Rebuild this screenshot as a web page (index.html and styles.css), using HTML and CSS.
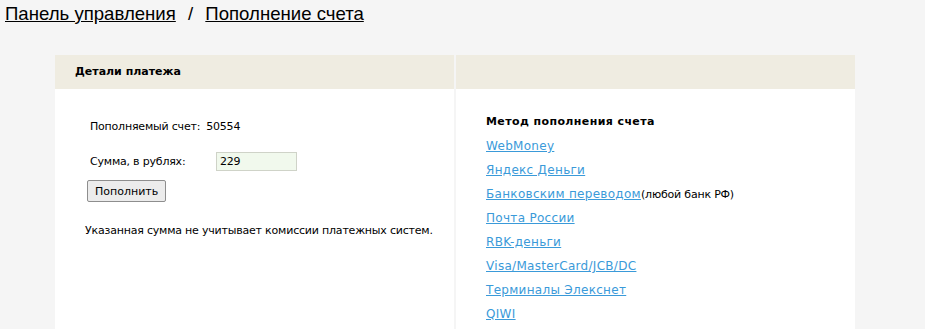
FILE: index.html
```html
<!DOCTYPE html>
<html lang="ru">
<head>
    <meta charset="UTF-8">
    <title>Пополнение счета</title>
    <link rel="stylesheet" href="styles.css">
</head>
<body>

<div class="crumbs">
    <a href="#">Панель управления</a>
    <span class="sep">/</span>
    <a href="#">Пополнение счета</a>
</div>

<div class="panel">
    <div class="col">
        <div class="col-head">Детали платежа</div>
        <div class="col-body left">
            <div class="row">
                <span class="label">Пополняемый счет:</span>
                <span>50554</span>
            </div>
            <div class="row">
                <span class="label wide">Сумма, в рублях:</span>
                <input type="text" class="sum" value="229">
            </div>
            <button class="pay-btn">Пополнить</button>
            <p class="note">Указанная сумма не учитывает комиссии платежных систем.</p>
        </div>
    </div>

    <div class="col">
        <div class="col-head"></div>
        <div class="col-body right">
            <div class="method-title">Метод пополнения счета</div>
            <ul class="methods">
                <li><a href="#">WebMoney</a></li>
                <li><a href="#">Яндекс Деньги</a></li>
                <li><a href="#">Банковским переводом</a>(любой банк РФ)</li>
                <li><a href="#">Почта России</a></li>
                <li><a href="#">RBK-деньги</a></li>
                <li><a href="#">Visa/MasterCard/JCB/DC</a></li>
                <li><a href="#">Терминалы Элекснет</a></li>
                <li><a href="#">QIWI</a></li>
            </ul>
        </div>
    </div>
</div>

</body>
</html>
```

FILE: styles.css
```css
body {
    margin: 0;
    padding: 0 5px;
    background-color: #f5f5f5;
    font-family: "DejaVu Sans", Tahoma, sans-serif;
    font-size: 11px;
    letter-spacing: -0.2px;
    color: #000;
}

.crumbs {
    font-family: "Liberation Sans", Arial, sans-serif;
    font-size: 18.6px;
    letter-spacing: 0;
    line-height: 22px;
    padding-top: 3px;
    height: 52px;
}

.crumbs a {
    color: #000;
}

.crumbs .sep {
    margin: 0 7px;
}

.panel {
    display: flex;
    width: 800px;
    margin-left: 50px;
    gap: 2px;
}

.col {
    flex: 1;
    display: flex;
    flex-direction: column;
}

.col:first-child {
    flex: 0 0 399px;
}

.col-head {
    background-color: #efece1;
    height: 34px;
    line-height: 34px;
    padding-left: 20px;
    font-weight: bold;
    letter-spacing: 0;
}

.col-body {
    background-color: #fff;
    height: 240px;
}

.col-body.left {
    padding: 31px 0 0 35px;
}

.row {
    display: flex;
    align-items: center;
    margin-bottom: 19px;
}

.row + .row {
    margin-bottom: 9px;
}

.label {
    margin-right: 6px;
}

.label.wide {
    width: 126px;
    margin-right: 0;
}

.sum {
    box-sizing: border-box;
    width: 81px;
    height: 19px;
    padding: 0 3px;
    border: 1px solid #cfd3c8;
    background-color: #f1f9ed;
    font-family: inherit;
    font-size: 11px;
    letter-spacing: -0.2px;
}

.pay-btn {
    margin-left: -3px;
    font-family: inherit;
    font-size: 11px;
    height: 22px;
    padding: 0 7px;
    background-color: #ececec;
    border: 1px solid #8e8e8e;
    border-radius: 2px;
}

.note {
    margin: 22px 0 0 -5px;
}

.col-body.right {
    padding: 26px 0 0 30px;
}

.method-title {
    font-weight: bold;
    letter-spacing: 0.4px;
    margin-bottom: 11px;
}

.methods {
    list-style: none;
    margin: 0;
    padding: 0;
}

.methods li {
    height: 24px;
}

.methods a {
    color: #3a9ad9;
    font-size: 12px;
    letter-spacing: 0.3px;
}
```
